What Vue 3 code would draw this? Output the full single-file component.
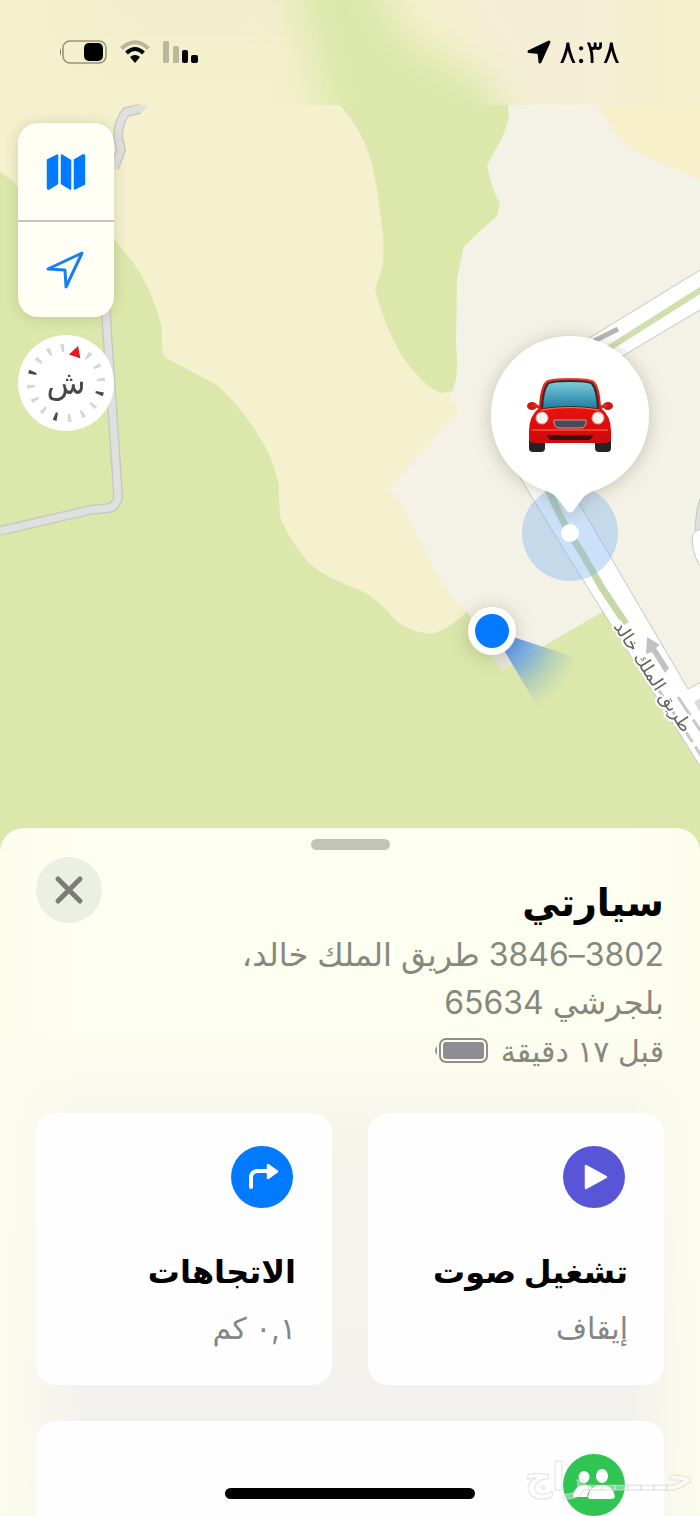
<template>
  <main class="screen">
    <section class="map">
      <svg class="map-canvas" viewBox="0 0 700 852" role="img" aria-label="خريطة">
        <defs>
          <filter id="haze" x="-20%" y="-60%" width="140%" height="220%">
            <feGaussianBlur stdDeviation="20" />
          </filter>
          <filter id="soft" x="-40%" y="-40%" width="180%" height="180%">
            <feDropShadow dx="0" dy="2" stdDeviation="9" flood-color="#6b6650" flood-opacity="0.35" />
          </filter>
          <clipPath id="topStrip"><rect width="700" height="105" /></clipPath>
          <radialGradient id="beam" gradientUnits="userSpaceOnUse" cx="492" cy="630" r="90">
            <stop offset="0.2" stop-color="#4d8ff0" />
            <stop offset="0.5" stop-color="#77a9d8" stop-opacity="0.85" />
            <stop offset="1" stop-color="#9cc8b4" stop-opacity="0" />
          </radialGradient>
          <linearGradient id="glass" x1="0" y1="0" x2="0" y2="1">
            <stop offset="0" stop-color="#7ccbd8" />
            <stop offset="1" stop-color="#1f7ea5" />
          </linearGradient>
          <linearGradient id="paint" x1="0" y1="0" x2="0" y2="1">
            <stop offset="0" stop-color="#f0382a" />
            <stop offset="0.3" stop-color="#f0140e" />
            <stop offset="1" stop-color="#cf0a0a" />
          </linearGradient>
        </defs>

        <!-- land -->
        <rect width="700" height="852" fill="#dbe7ab" />
        <path fill="#f5f0cd" d="M0 0H300L340 105Q362 130 371 160Q378 190 380 212Q386 246 382 268L375 290Q392 350 418 376Q432 391 442 393L452 391L462 412L430 490L460 570L467 612Q445 632 430 634Q410 632 395 620Q380 600 360 590Q325 578 308 562Q290 540 281 520Q278 500 279 485Q272 455 258 435Q236 400 215 384L166 358Q162 354 162 345V328Q152 290 134 264Q120 245 106 230L50 205Q22 196 14 182L0 172Z" />
        <path fill="#f4f2e6" d="M508 105H700V765L604 611L504 669L467 612Q445 590 435 570Q425 545 410 522Q403 503 389 489L458 411L450 396Q460 380 456 345L457 280Q460 262 464 247Q480 230 497 216L500 204Q492 190 487 166Q490 158 500 142Q507 128 509 115Z" />
        <path fill="#f7f0cb" d="M598 105Q612 135 630 148Q650 160 675 169Q690 174 700 182V0H640Z" />
        <path fill="#e6e4da" d="M490 655L508 640L516 663L502 670Z" />

        <!-- blurred strip behind the status bar -->
        <g clip-path="url(#topStrip)">
          <rect width="700" height="105" fill="#f5f0cd" />
          <g filter="url(#haze)">
            <path fill="#d9e7a8" d="M285 -60H365L400 35L500 92V170H340Z" />
            <path fill="#f4eed8" d="M410 -60H625V150H515L500 80Z" opacity="0.75" />
            <path fill="#eeeacb" d="M100 -60H285V30H100Z" opacity="0.6" />
          </g>
        </g>

        <!-- minor road -->
        <g fill="none" stroke-linejoin="round">
          <g stroke="#c9c9c4" stroke-width="10">
            <path d="M114 168L121 150L118 138Q118 122 126 112L140 109" />
            <path d="M105 300L118 494Q118 506 109 508L90 510L0 531" />
          </g>
          <g stroke="#e0e0de" stroke-width="7">
            <path d="M114 168L121 150L118 138Q118 122 126 112L142 108" />
            <path d="M105 300L118 494Q118 506 109 508L90 510L0 531" />
          </g>
        </g>
        <path fill="#e0e0de" d="M138 105L148 105L144 111L136 112Z" />

        <!-- king khalid road -->
        <path fill="#fff" stroke="#c6c5c2" d="M586 340L710 264V304L616 360Z" />
        <path stroke="#cfdfae" stroke-width="6" d="M606 350L710 284" />
        <path stroke="#b5b5b3" stroke-width="5" d="M594 341L618 329" />
        <path fill="#fff" stroke="#c6c5c2" d="M519 476L571 561L710 782V677L688 689L577 500L560 470Z" />
        <path fill="none" stroke="#c6d8a5" stroke-width="7" d="M546 484Q560 520 582 553L602 588L626 624" />
        <path stroke="#c9c8c8" stroke-width="3" stroke-dasharray="22 5" d="M622 633L702 757M678 697L704 736" />
        <path fill="#dcdcda" d="M694 702L700 698V712Z" />
        <path fill="#dde0dc" stroke="#c6c5c2" d="M702 494Q695 508 695 535H702Z" />
        <path fill="#fff" stroke="#c6c5c2" d="M702 529Q692 530 692 540Q694 560 702 568Z" />
        <text class="road-label" transform="translate(648 680) rotate(57)" text-anchor="middle">طريق الملك خالد</text>
        <path fill="#c2c2c2" d="M647 637L660 645L656 648L669 668L665 673L652 652L646 654Z" />

        <!-- own position -->
        <path fill="url(#beam)" d="M492 630L583 660L542 714Z" />
        <circle cx="492" cy="631" r="24" fill="#fff" filter="url(#soft)" />
        <circle cx="492" cy="631" r="17" fill="#027aff" />

        <!-- car pin -->
        <circle cx="570" cy="533" r="48" fill="#7db4f0" fill-opacity="0.4" />
        <path fill="#fff" filter="url(#soft)" d="M570 336A79 79 0 0 1 649 415A79 79 0 0 1 596 490Q585 493 579 503L573 511Q570 514 567 511L561 503Q555 493 544 490A79 79 0 0 1 491 415A79 79 0 0 1 570 336Z" />
        <circle cx="570" cy="533" r="9" fill="#fff" />
        <g>
          <rect x="529" y="434" width="16" height="18" rx="4" fill="#242224" />
          <rect x="595" y="434" width="16" height="18" rx="4" fill="#242224" />
          <ellipse cx="532" cy="406" rx="5" ry="4" fill="#cf1712" />
          <ellipse cx="608" cy="406" rx="5" ry="4" fill="#cf1712" />
          <path fill="#d92a1c" d="M532 406L544 411V408L534 403ZM608 406L596 411V408L606 403Z" />
          <path fill="url(#paint)" d="M546 381Q550 378 570 378Q590 378 594 381Q600 386 601 408Q611 416 611 431V440Q610 443 604 443H536Q530 443 529 440V431Q529 416 539 408Q540 386 546 381Z" />
          <path fill="#352a2b" d="M547 383Q551 380 570 380Q589 380 593 383Q598 389 599 409Q570 405 541 409Q542 389 547 383Z" />
          <path fill="url(#glass)" d="M549 384Q553 382 570 382Q587 382 591 384Q596 390 597 408Q570 404 543 408Q544 390 549 384Z" />
          <path fill="none" stroke="#ff7460" stroke-width="1" d="M541 410Q570 405 599 410M532 430H608" />
          <circle cx="542" cy="418" r="6" fill="#fff1ed" stroke="#dca49e" />
          <circle cx="598" cy="418" r="6" fill="#fff1ed" stroke="#dca49e" />
          <path fill="#4c4a57" stroke="#c99" d="M554 420H586Q587 421 585 426Q584 428 580 428H560Q556 428 555 426Q553 421 554 420Z" />
          <path fill="#371013" d="M547 435H593Q592 440 588 440H552Q548 440 547 435Z" />
        </g>
      </svg>

      <header class="status">
        <div class="status-icons">
          <svg width="48" height="24" viewBox="0 0 48 24" aria-hidden="true">
            <rect x="4" y="1" width="43" height="22" rx="7" fill="none" stroke="#96937c" stroke-width="1.6" />
            <rect x="25" y="3" width="19" height="18" rx="5" />
            <path d="M2 8Q0 12 2 16Z" fill="#77745f" />
          </svg>
          <svg width="30" height="24" viewBox="0 0 30 24" fill="none" aria-hidden="true">
            <path d="M1.500 8.500Q15 -4 28.500 8.500" stroke="#b8b598" stroke-width="4" />
            <path d="M6.500 13Q15 5 23.500 13" stroke="#000" stroke-width="4" />
            <path d="M10 17Q15 13 20 17L15 23Z" fill="#000" />
          </svg>
          <svg width="36" height="24" viewBox="0 0 36 24" aria-hidden="true">
            <rect x="0" y="1" width="6" height="22" rx="1.500" fill="#bab79c" />
            <rect x="10" y="6" width="6" height="17" rx="1.500" fill="#bab79c" />
            <rect x="19" y="10" width="6" height="13" rx="2" />
            <rect x="28" y="15" width="7" height="8" rx="2" />
          </svg>
        </div>
        <div class="status-time">
          <svg width="24" height="24" viewBox="0 0 24 24" aria-hidden="true">
            <path d="M22 2L2 11.500L12 12.500L13 22Z" stroke="#000" stroke-width="3" stroke-linejoin="round" />
          </svg>
          <time>٨:٣٨</time>
        </div>
      </header>

      <nav class="controls">
        <div class="control-group">
          <button type="button" aria-label="نمط الخريطة">
            <svg width="40" height="38" viewBox="0 0 40 38" fill="#027aff" stroke="#027aff" stroke-width="1.500" stroke-linejoin="round" aria-hidden="true">
              <path d="M1.500 7L11.500 2V30.500L3 36Q1.500 36.500 1.500 34.500Z" />
              <path d="M15.500 2L24.500 7.500V36L15.500 30.500Z" />
              <path d="M28.500 7L37 2Q38.500 1.500 38.500 3.500V31L28.500 36Z" />
            </svg>
          </button>
          <button type="button" aria-label="موقعي">
            <svg width="40" height="40" viewBox="0 0 40 40" fill="none" stroke="#1580f0" stroke-width="3" stroke-linejoin="round" aria-hidden="true">
              <path d="M36 3L2 19L19 20L20 37Z" />
            </svg>
          </button>
        </div>
        <button class="compass" type="button" aria-label="البوصلة">
          <svg viewBox="0 0 96 96" aria-hidden="true">
            <g v-for="a in ticks" :key="a.deg" :transform="`rotate(${a.deg} 48 48)`">
              <path d="M46 9H50L49 17H47Z" :fill="a.dark ? '#4a4a4a' : '#d6d6d6'" />
            </g>
            <path d="M48 9L54 20H42Z" fill="#ed1520" transform="rotate(18 48 48)" />
          </svg>
          <span>ش</span>
        </button>
      </nav>
    </section>

    <section class="sheet" dir="rtl">
      <div class="grabber"></div>
      <div class="sheet-head">
        <div class="details">
          <h1>سيارتي</h1>
          <p class="address">3802–3846 طريق الملك خالد،<br>بلجرشي 65634</p>
          <p class="seen">
            <span>قبل ١٧ دقيقة</span>
            <svg width="54" height="26" viewBox="0 0 54 26" aria-hidden="true">
              <rect x="6" y="1" width="47" height="23" rx="6" fill="none" stroke="#8f8f8a" stroke-width="2" />
              <rect x="9" y="4" width="41" height="17" rx="3" fill="#8e8d93" />
              <path d="M3 8Q-1 12.500 3 17Z" fill="#8f8f8a" />
            </svg>
          </p>
        </div>
        <button class="close" type="button" aria-label="إغلاق">
          <svg width="30" height="30" viewBox="0 0 30 30" stroke="#7c7d75" stroke-width="5" stroke-linecap="round" aria-hidden="true">
            <path d="M4 4L26 26M26 4L4 26" />
          </svg>
        </button>
      </div>

      <div class="actions">
        <button v-for="item in actions" :key="item.title" class="card" type="button">
          <svg class="badge" viewBox="0 0 62 62" aria-hidden="true">
            <circle cx="31" cy="31" r="31" :fill="item.color" />
            <path v-if="item.icon === 'play'" d="M23 20L43 31L23 42Z" fill="#fff" stroke="#fff" stroke-width="2.500" stroke-linejoin="round" />
            <g v-else>
              <path d="M20 41V32Q20 25 27 25H36" fill="none" stroke="#fff" stroke-width="4" stroke-linecap="round" />
              <path d="M37 19L46 25.500L37 32Z" fill="#fff" stroke="#fff" stroke-width="2.500" stroke-linejoin="round" />
            </g>
          </svg>
          <span class="card-title">{{ item.title }}</span>
          <span class="card-note">{{ item.note }}</span>
        </button>
        <div class="card wide">
          <svg class="badge" viewBox="0 0 62 62" role="img" aria-label="مشاركة">
            <circle cx="31" cy="31" r="31" fill="#30c552" />
            <g fill="#fff">
              <ellipse cx="21" cy="23" rx="5.500" ry="6" />
              <path d="M10 43Q11 31 22 31Q27 31 29 34Q25 37 24 43Z" />
              <ellipse cx="39" cy="22" rx="6" ry="7" />
              <path d="M25 43Q27 31 39 31Q50 31 52 43Q51 45 48 45H28Q25 45 25 43Z" />
            </g>
          </svg>
        </div>
      </div>
    </section>

    <svg class="watermark" width="220" height="80" viewBox="0 0 220 80">
      <text x="214" y="54" direction="rtl">حــــــراج</text>
    </svg>
    <div class="home-bar"></div>
  </main>
</template>

<script setup>
import { ref } from 'vue'

const actions = ref([
  { icon: 'play', title: 'تشغيل صوت', note: 'إيقاف', color: '#5856d6' },
  { icon: 'turn', title: 'الاتجاهات', note: '٠,١ كم', color: '#027aff' },
])

// north is replaced by the red arrow, so its tick is left out
const ticks = Array.from({ length: 15 }, (_, i) => ({
  deg: 17 + (i + 1) * 22.5,
  dark: (i + 1) % 4 === 0,
}))
</script>

<style>
body {
  margin: 0;
  background: #fdfff0;
}
</style>

<style scoped>
.screen {
  position: relative;
  height: 100vh;
  overflow: hidden;
  font-family: Inter, "DejaVu Sans", sans-serif;
  color: #000;
}

button {
  border: 0;
  padding: 0;
  margin: 0;
  font: inherit;
  color: inherit;
  cursor: pointer;
}

.map {
  position: relative;
}

.map-canvas {
  display: block;
  width: 100%;
}

.road-label {
  font-size: 18px;
  fill: #66635f;
  stroke: #fff;
  stroke-width: 4px;
  paint-order: stroke;
}

.status {
  position: absolute;
  top: 36px;
  left: 59px;
  right: 80px;
  height: 32px;
  display: flex;
  align-items: center;
  justify-content: space-between;
}

.status-icons {
  display: flex;
  gap: 13px;
}

.status-time {
  display: flex;
  align-items: center;
  gap: 8px;
  font-size: 32px;
  line-height: 32px;
}

.controls {
  position: absolute;
  top: 123px;
  left: 18px;
  width: 96px;
  display: flex;
  flex-direction: column;
  gap: 18px;
}

.control-group {
  border-radius: 20px;
  background: #fffff6;
  box-shadow: 0 1px 14px rgba(90, 90, 50, 0.2);
  overflow: hidden;
}

.control-group button {
  display: flex;
  align-items: center;
  justify-content: center;
  width: 100%;
  height: 97px;
  background: none;
}

.control-group button + button {
  border-top: 2px solid #c5c5c0;
}

.compass {
  position: relative;
  height: 96px;
  border-radius: 50%;
  background: #fff;
}

.compass svg {
  display: block;
}

.compass span {
  position: absolute;
  inset: 0;
  line-height: 96px;
  font-size: 32px;
  color: #484848;
}

.sheet {
  position: relative;
  margin-top: -24px;
  padding: 11px 36px 0;
  border-radius: 24px 24px 0 0;
  background: linear-gradient(90deg, rgba(253, 253, 236, 0.9), rgba(253, 253, 236, 0) 12%, rgba(253, 253, 236, 0) 90%, rgba(253, 253, 236, 0.9)), linear-gradient(#fdfff0 0, #fdfff0 200px, #f7f6ec 290px, #f2f1ed 560px, #f4f3ee 700px);
}

.grabber {
  width: 79px;
  height: 11px;
  margin: 0 auto;
  border-radius: 6px;
  background: #c2c4b4;
}

.sheet-head {
  display: flex;
  justify-content: space-between;
  align-items: flex-start;
  padding-top: 7px;
}

.details {
  padding-top: 16px;
}

h1,
p {
  margin: 0;
}

h1 {
  font-size: 38px;
  line-height: 58px;
  font-weight: 700;
}

.address,
.seen {
  font-size: 32px;
  line-height: 48px;
  color: #86877d;
}

.seen {
  display: flex;
  align-items: center;
  gap: 13px;
  font-size: 30px;
}

.close {
  display: flex;
  align-items: center;
  justify-content: center;
  width: 66px;
  height: 66px;
  border-radius: 50%;
  background: #ecefe4;
}

.actions {
  display: grid;
  grid-template-columns: 1fr 1fr;
  gap: 36px;
  padding-top: 38px;
}

.card {
  display: flex;
  flex-direction: column;
  align-items: flex-start;
  height: 272px;
  padding: 33px 36px 24px;
  border-radius: 20px;
  background: #fefefe;
  box-sizing: border-box;
  text-align: right;
}

.card.wide {
  grid-column: 1 / -1;
}

.badge {
  flex: none;
  width: 62px;
  height: 62px;
  margin-right: 3px;
}

.card-title {
  margin-top: 36px;
  font-size: 32px;
  line-height: 56px;
  font-weight: 700;
}

.card-note {
  font-size: 30px;
  line-height: 56px;
  color: #858585;
}

.home-bar {
  position: absolute;
  left: 50%;
  bottom: 17px;
  width: 250px;
  height: 11px;
  margin-left: -125px;
  border-radius: 6px;
  background: #000;
}

.watermark {
  position: absolute;
  right: 0;
  bottom: 0;
}

.watermark text {
  font-size: 38px;
  font-weight: 700;
  fill: #fff;
  fill-opacity: 0.4;
  stroke: #d5d8dc;
  stroke-opacity: 0.7;
  stroke-width: 1px;
}
</style>
